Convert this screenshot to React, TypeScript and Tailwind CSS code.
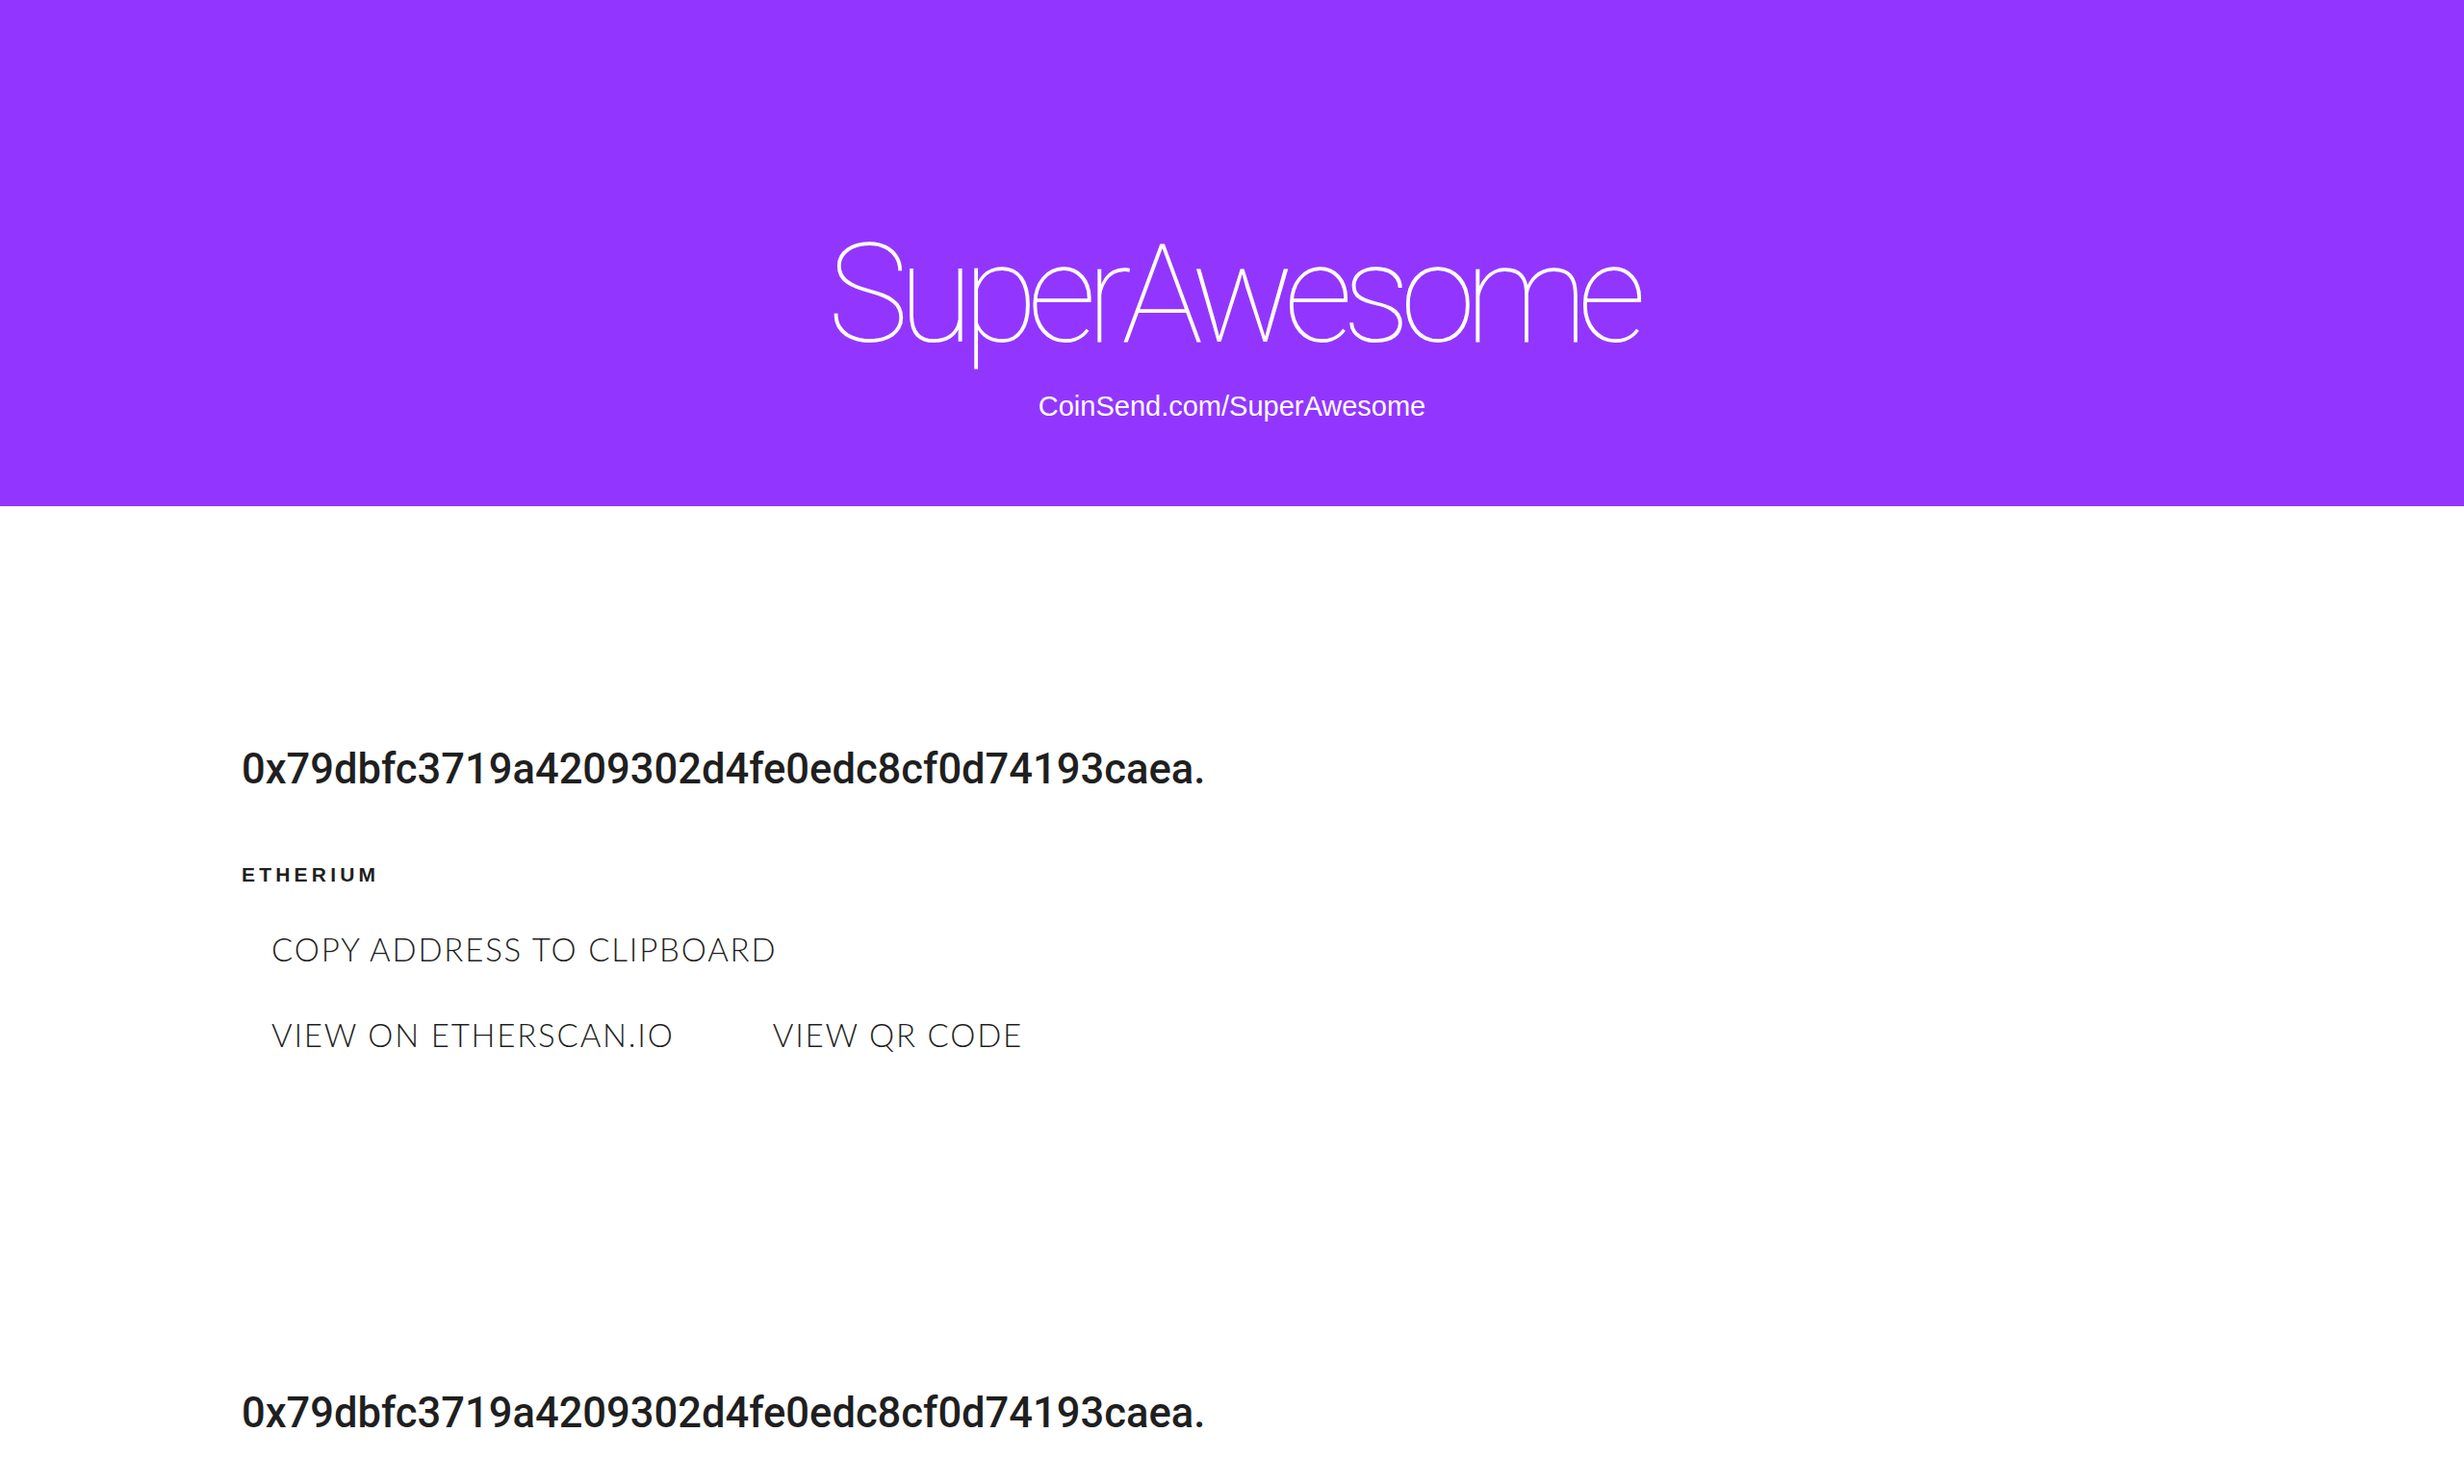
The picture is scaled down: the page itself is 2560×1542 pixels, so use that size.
export default function App() {
  const address = "0x79dbfc3719a4209302d4fe0edc8cf0d74193caea."

  return (
    <div className="min-h-screen bg-white" style={{ fontFamily: '"Liberation Sans", Arial, sans-serif' }}>
      <header className="h-[526px] bg-[#9236ff] flex flex-col items-center pt-[236px] text-white">
        <h1 className="font-['Roboto',sans-serif] font-thin text-[142px] leading-none tracking-[-0.075em]">
          SuperAwesome
        </h1>
        <p className="mt-[30px] text-[29px] leading-none">CoinSend.com/SuperAwesome</p>
      </header>

      <main className="pl-[251px] pt-[252px] text-[#1f1f1f]">
        <section>
          <h2 className="font-['Roboto',sans-serif] text-[43.5px] leading-none font-medium">{address}</h2>
          <p className="mt-[76px] text-[21px] leading-none font-bold tracking-[0.2em]">ETHERIUM</p>
          <div className="mt-[51px] flex flex-col gap-[56px] font-['Lato',sans-serif] font-light text-[33px] leading-none tracking-[0.055em]">
            <div>
              <button className="px-[31px]">COPY ADDRESS TO CLIPBOARD</button>
            </div>
            <div className="flex gap-[40px]">
              <button className="px-[31px]">VIEW ON ETHERSCAN.IO</button>
              <button className="px-[31px]">VIEW QR CODE</button>
            </div>
          </div>
        </section>

        <section className="mt-[355px]">
          <h2 className="font-['Roboto',sans-serif] text-[43.5px] leading-none font-medium">{address}</h2>
        </section>
      </main>
    </div>
  )
}
